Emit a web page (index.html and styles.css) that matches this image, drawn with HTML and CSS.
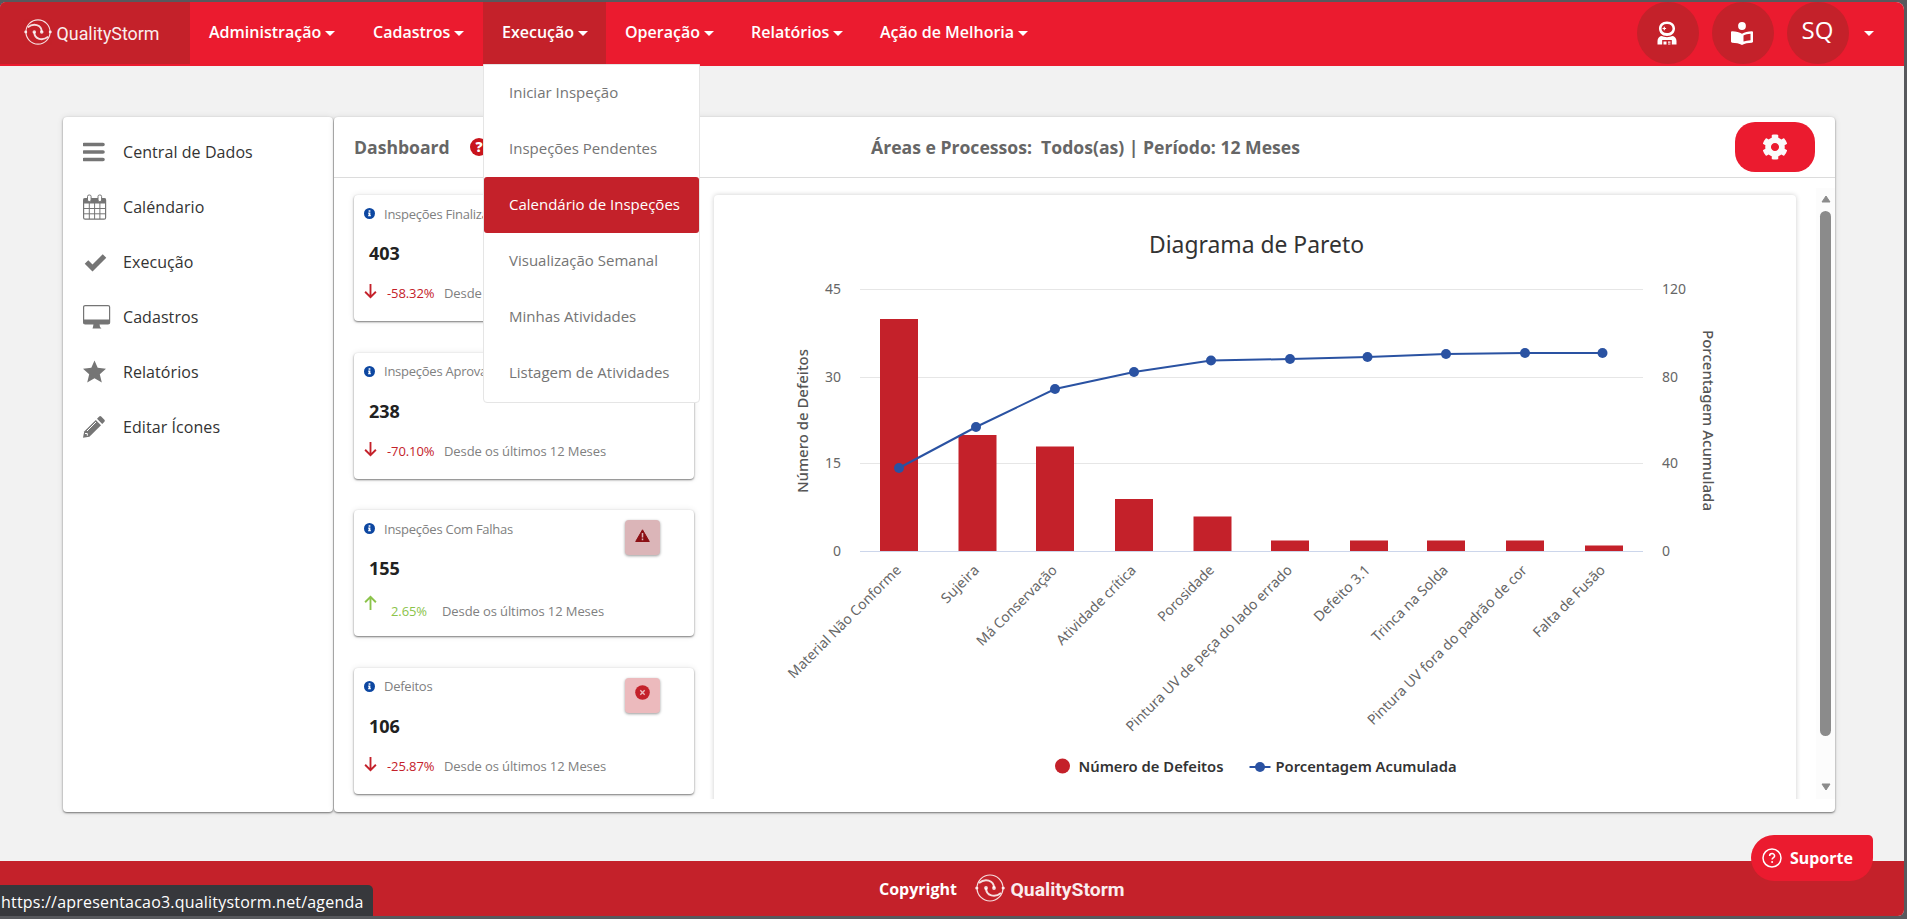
FILE: index.html
```
<!DOCTYPE html>
<html lang="pt-BR">
<head>
    <meta charset="UTF-8">
    <meta name="viewport" content="width=device-width, initial-scale=1.0">
    <title>QualityStorm</title>
    <link rel="stylesheet" href="styles.css">
</head>
<body>
    <svg width="0" height="0" class="defs">
        <symbol id="storm" viewBox="0 0 30 28">
            <g fill="none" stroke="#fff" stroke-width="1.2" opacity="0.85">
                <circle cx="15" cy="14" r="13"/>
                <path d="M4 9c6-5 15-3 15 5" stroke-width="2"/>
                <path d="M26 19c-6 5-15 3-15-5" stroke-width="2"/>
            </g>
            <g fill="#fff" opacity="0.85">
                <circle cx="11" cy="14" r="1.9"/>
                <circle cx="19" cy="14" r="1.9"/>
                <circle cx="1.8" cy="14" r="1.6"/>
                <circle cx="28.2" cy="14" r="1.6"/>
            </g>
        </symbol>
        <symbol id="info" viewBox="0 0 10 10">
            <circle cx="5" cy="5" r="5" fill="#0d47a1"/>
            <path d="M4.2 2h1.6v1.4H4.2zM3.8 4.2h2v2.4h.5v1H3.7v-1h.5V5.2h-.4z" fill="#fff"/>
        </symbol>
        <symbol id="down" viewBox="0 0 14 16">
            <path d="M7 .5v14M1.2 8.8L7 14.6l5.8-5.8" fill="none" stroke="#c4212a" stroke-width="2"/>
        </symbol>
        <symbol id="up" viewBox="0 0 14 16">
            <path d="M7 15.5v-14M1.2 7.2L7 1.4l5.8 5.8" fill="none" stroke="#8bc34a" stroke-width="2"/>
        </symbol>
    </svg>
    <div class="window">
        <div class="page">
            <header class="header">
                <a class="brand" href="#">
                    <svg width="160" height="34" viewBox="0 0 160 34">
                        <use href="#storm" x="0" y="3" width="28" height="26"/>
                        <text class="logo-text" x="32.500" y="24" textLength="103" lengthAdjust="spacingAndGlyphs">QualityStorm</text>
                    </svg>
                </a>
                <nav class="nav">
                    <a class="nav-item adm" href="#">Administração<i class="caret"></i></a>
                    <a class="nav-item cad" href="#">Cadastros<i class="caret"></i></a>
                    <div class="nav-item exe active">Execução<i class="caret"></i>
                        <div class="dropdown">
                            <a href="#">Iniciar Inspeção</a>
                            <a href="#">Inspeções Pendentes</a>
                            <a href="#" class="selected">Calendário de Inspeções</a>
                            <a href="#">Visualização Semanal</a>
                            <a href="#">Minhas Atividades</a>
                            <a href="#">Listagem de Atividades</a>
                        </div>
                    </div>
                    <a class="nav-item ope" href="#">Operação<i class="caret"></i></a>
                    <a class="nav-item rel" href="#">Relatórios<i class="caret"></i></a>
                    <a class="nav-item aca" href="#">Ação de Melhoria<i class="caret"></i></a>
                </nav>
                <div class="user">
                    <div class="round">
                        <svg width="20" height="24" viewBox="0 0 20 24">
                            <path fill="#fff" fill-rule="evenodd" d="M10 .5c5 0 8 3 8 7s-3 7.500-8 7.500-8-3.500-8-7.500 3-7 8-7zM10 3C6.500 3 4.500 4.800 4.500 7.500S6.500 12 10 12s5.500-1.800 5.500-4.500S13.500 3 10 3z"/>
                            <path d="M5.500 7.500h3.600M7.300 5.700v3.600" stroke="#fff" stroke-width="1.200"/>
                            <path fill="#fff" d="M.5 23.500V20c0-3 2-5 4.500-5 2 1.500 8 1.500 10 0 2.500 0 4.500 2 4.500 5v3.500h-4.700V19H5.200v4.500z"/>
                            <path fill="#fff" d="M6.500 20.500h3v3h-3zM11 20.500h2.500v1.200H11zM11 22.500h2.500v1H11z"/>
                        </svg>
                    </div>
                    <div class="round">
                        <svg width="22" height="23" viewBox="0 0 22 23">
                            <circle cx="11" cy="4" r="3.900" fill="#fff"/>
                            <path fill="#fff" fill-rule="evenodd" d="M1.200 9.200C5 9.200 8.500 10 11 11.800 13.500 10 17 9.200 20.800 9.200c.7 0 1.200.4 1.200 1.200v9.200c0 .7-.4 1.100-1.200 1.200-3.500.2-7 .6-9.800 2.200-2.800-1.600-6.300-2-9.800-2.200-.8-.1-1.200-.5-1.200-1.200v-9.200c0-.8.500-1.200 1.200-1.200zM12.500 13.400v6.200c2.100-.8 4.500-1.200 7-1.400v-6.400c-2.700.2-5.100.7-7 1.600z"/>
                        </svg>
                    </div>
                    <div class="round initials">SQ</div>
                    <i class="caret"></i>
                </div>
            </header>

            <main class="main">
                <aside class="sidebar">
                    <a href="#"><svg width="28" height="26" viewBox="0 0 28 26"><path d="M1 5.500h19M1 13h19M1 20.500h19" stroke="#757575" stroke-width="3.600" stroke-linecap="round"/></svg>Central de Dados</a>
                    <a href="#"><svg width="28" height="26" viewBox="0 0 28 26"><rect x=".6" y="4.600" width="22" height="20.600" rx="1.500" fill="#fff" stroke="#757575" stroke-width="1.200"/><path d="M.6 4.500h22v5H.6z" fill="#757575"/><path d="M6.300 9v16M11.600 9v16M16.900 9v16M1 14.500h21M1 19.800h21" stroke="#757575"/><rect x="4.500" y="1" width="3.600" height="6.500" rx="1.500" fill="#fff" stroke="#757575"/><rect x="15" y="1" width="3.600" height="6.500" rx="1.500" fill="#fff" stroke="#757575"/></svg>Caléndario</a>
                    <a href="#"><svg width="28" height="26" viewBox="0 0 28 26"><path d="M3.500 13l6 6L21.500 7" fill="none" stroke="#757575" stroke-width="5"/></svg>Execução</a>
                    <a href="#"><svg width="28" height="26" viewBox="0 0 28 26"><rect x=".6" y="1.600" width="26" height="18.400" rx="1.500" fill="#fff" stroke="#757575" stroke-width="1.200"/><path d="M.6 15.500h26v3.500q0 1-1 1h-24q-1 0-1-1zM10.500 20h6l.5 3 1.500 1.500h-9L10 23z" fill="#757575"/></svg>Cadastros</a>
                    <a href="#"><svg width="28" height="26" viewBox="0 0 28 26"><path d="M11.500 1.500l3.200 7.300 8.300.9-6.200 5.500 2 8.300-7.300-4.200-7.300 4.200 2-8.300L0 9.700l8.300-.9z" fill="#757575"/></svg>Relatórios</a>
                    <a href="#"><svg width="28" height="26" viewBox="0 0 28 26"><path d="M0 23.800l1.200-6.300L12.800 6l5.200 5.200L6.400 22.700z" fill="#757575"/><path d="M14 4.800l2.200-2.200q1-1 2 0l3.200 3.200q1 1 0 2L19.200 10z" fill="#757575"/><path d="M4 17L13 8M2 19.500h2.300v2.200" stroke="#fff" stroke-width="1" fill="none"/></svg>Editar Ícones</a>
                </aside>

                <section class="content">
                    <div class="content-header">
                        <h1>Dashboard</h1>
                        <span class="help">?</span>
                        <h2>Áreas e Processos:&nbsp; Todos(as) | Período: 12 Meses</h2>
                        <button class="gear">
                            <svg width="26" height="26" viewBox="0 0 512 512"><path fill="#fafafa" d="M487.400 315.700l-42.600-24.600c4.300-23.200 4.300-47 0-70.200l42.600-24.600c4.900-2.800 7.100-8.600 5.500-14-11.100-35.600-30-67.800-54.700-94.600-3.800-4.100-10-5.100-14.800-2.300L380.800 110c-17.900-15.400-38.500-27.300-60.800-35.100V25.800c0-5.600-3.900-10.500-9.400-11.700-36.700-8.200-74.300-7.800-109.200 0-5.500 1.200-9.400 6.100-9.400 11.700V75c-22.200 7.900-42.800 19.800-60.800 35.100L88.700 85.500c-4.900-2.800-11-1.900-14.800 2.300-24.700 26.700-43.600 58.900-54.700 94.600-1.700 5.400.6 11.200 5.500 14L67.300 221c-4.300 23.200-4.300 47 0 70.200l-42.600 24.600c-4.900 2.800-7.100 8.600-5.500 14 11.100 35.600 30 67.800 54.700 94.600 3.800 4.100 10 5.100 14.800 2.300l42.600-24.600c17.900 15.400 38.500 27.300 60.800 35.100v49.200c0 5.600 3.900 10.500 9.400 11.700 36.700 8.200 74.300 7.800 109.200 0 5.500-1.200 9.400-6.100 9.400-11.700v-49.200c22.200-7.900 42.800-19.800 60.800-35.100l42.600 24.600c4.900 2.800 11 1.900 14.800-2.300 24.700-26.700 43.600-58.900 54.700-94.600 1.500-5.500-.7-11.300-5.600-14.100zM256 336c-44.100 0-80-35.900-80-80s35.900-80 80-80 80 35.900 80 80-35.900 80-80 80z"/></svg>
                        </button>
                    </div>
                    <div class="scroller">
                        <div class="cards">
                            <div class="card">
                                <div class="card-title"><svg class="info"><use href="#info"/></svg>Inspeções Finalizadas</div>
                                <div class="card-value">403</div>
                                <div class="card-trend"><svg class="arrow"><use href="#down"/></svg><span class="percent">-58.32%</span><span>Desde os últimos 12 Meses</span></div>
                            </div>
                            <div class="card">
                                <div class="card-title"><svg class="info"><use href="#info"/></svg>Inspeções Aprovadas</div>
                                <div class="card-value">238</div>
                                <div class="card-trend"><svg class="arrow"><use href="#down"/></svg><span class="percent">-70.10%</span><span>Desde os últimos 12 Meses</span></div>
                            </div>
                            <div class="card">
                                <div class="card-title"><svg class="info"><use href="#info"/></svg>Inspeções Com Falhas</div>
                                <div class="card-value">155</div>
                                <div class="card-trend rise"><svg class="arrow"><use href="#up"/></svg><span class="percent">2.65%</span><span>Desde os últimos 12 Meses</span></div>
                                <div class="badge warning"><svg width="15" height="13" viewBox="0 0 15 13"><path d="M7.500.8L14.300 12.500H.7z" fill="#8b0f14" stroke="#8b0f14" stroke-linejoin="round"/><path d="M7.500 4v4.500M7.500 9.600v1.600" stroke="#dbb5b8" stroke-width="1.500"/></svg></div>
                            </div>
                            <div class="card">
                                <div class="card-title"><svg class="info"><use href="#info"/></svg>Defeitos</div>
                                <div class="card-value">106</div>
                                <div class="card-trend"><svg class="arrow"><use href="#down"/></svg><span class="percent">-25.87%</span><span>Desde os últimos 12 Meses</span></div>
                                <div class="badge error"><svg width="15" height="15" viewBox="0 0 15 15"><circle cx="7.500" cy="7.500" r="7.300" fill="#c4212a"/><path d="M5.300 5.300l4.400 4.400M9.700 5.300L5.300 9.700" stroke="#ecbabd" stroke-width="1.400"/></svg></div>
                            </div>
                        </div>
                        <div class="chart">
                            <svg width="1082" height="620" viewBox="714 195 1082 620">
                                <text class="chart-title" x="1149" y="253" textLength="215" lengthAdjust="spacingAndGlyphs">Diagrama de Pareto</text>
                                <g class="grid">
                                    <path d="M860 289.500H1643M860 377.500H1643M860 463.500H1643"/>
                                    <path class="base" d="M860 551.500H1643"/>
                                </g>
                                <g class="ticks end">
                                    <text x="841" y="294">45</text>
                                    <text x="841" y="382">30</text>
                                    <text x="841" y="468">15</text>
                                    <text x="841" y="556">0</text>
                                </g>
                                <g class="ticks">
                                    <text x="1662" y="294">120</text>
                                    <text x="1662" y="382">80</text>
                                    <text x="1662" y="468">40</text>
                                    <text x="1662" y="556">0</text>
                                </g>
                                <text class="axis-title" transform="translate(808 493) rotate(-90)" textLength="144" lengthAdjust="spacingAndGlyphs">Número de Defeitos</text>
                                <text class="axis-title" transform="translate(1703 330) rotate(90)" textLength="181" lengthAdjust="spacingAndGlyphs">Porcentagem Acumulada</text>
                                <g class="bars">
                                    <rect x="880" y="319" width="38" height="232"/>
                                    <rect x="958.500" y="435" width="38" height="116"/>
                                    <rect x="1036" y="446.500" width="38" height="104.500"/>
                                    <rect x="1115" y="499" width="38" height="52"/>
                                    <rect x="1193.500" y="516.500" width="38" height="34.500"/>
                                    <rect x="1271" y="540.500" width="38" height="10.500"/>
                                    <rect x="1350" y="540.500" width="38" height="10.500"/>
                                    <rect x="1427" y="540.500" width="38" height="10.500"/>
                                    <rect x="1506" y="540.500" width="38" height="10.500"/>
                                    <rect x="1585" y="545.500" width="38" height="5.500"/>
                                </g>
                                <polyline class="line" points="899,468 976,427 1055,389 1134,372 1211,360.500 1290,359 1367.500,357 1446,354 1525,353 1602.500,353"/>
                                <g class="dots">
                                    <circle cx="899" cy="468" r="5"/>
                                    <circle cx="976" cy="427" r="5"/>
                                    <circle cx="1055" cy="389" r="5"/>
                                    <circle cx="1134" cy="372" r="5"/>
                                    <circle cx="1211" cy="360.500" r="5"/>
                                    <circle cx="1290" cy="359" r="5"/>
                                    <circle cx="1367.500" cy="357" r="5"/>
                                    <circle cx="1446" cy="354" r="5"/>
                                    <circle cx="1525" cy="353" r="5"/>
                                    <circle cx="1602.500" cy="353" r="5"/>
                                </g>
                                <g class="labels">
                                    <text transform="translate(902 571) rotate(-45)" textLength="153" lengthAdjust="spacingAndGlyphs">Material Não Conforme</text>
                                    <text transform="translate(980 571) rotate(-45)" textLength="47" lengthAdjust="spacingAndGlyphs">Sujeira</text>
                                    <text transform="translate(1058 571) rotate(-45)" textLength="107" lengthAdjust="spacingAndGlyphs">Má Conservação</text>
                                    <text transform="translate(1137 571) rotate(-45)" textLength="106" lengthAdjust="spacingAndGlyphs">Atividade crítica</text>
                                    <text transform="translate(1215 571) rotate(-45)" textLength="73" lengthAdjust="spacingAndGlyphs">Porosidade</text>
                                    <text transform="translate(1293 571) rotate(-45)" textLength="228" lengthAdjust="spacingAndGlyphs">Pintura UV de peça do lado errado</text>
                                    <text transform="translate(1371 571) rotate(-45)" textLength="73" lengthAdjust="spacingAndGlyphs">Defeito 3.1</text>
                                    <text transform="translate(1449 571) rotate(-45)" textLength="101" lengthAdjust="spacingAndGlyphs">Trinca na Solda</text>
                                    <text transform="translate(1528 571) rotate(-45)" textLength="219" lengthAdjust="spacingAndGlyphs">Pintura UV fora do padrão de cor</text>
                                    <text transform="translate(1606 571) rotate(-45)" textLength="95" lengthAdjust="spacingAndGlyphs">Falta de Fusão</text>
                                </g>
                                <circle cx="1062.500" cy="766" r="7.500" fill="#c4212a"/>
                                <text class="legend" x="1078.500" y="772" textLength="145" lengthAdjust="spacingAndGlyphs">Número de Defeitos</text>
                                <path class="line" d="M1249.500 767h21"/>
                                <circle cx="1260" cy="767" r="5" fill="#2a52a2"/>
                                <text class="legend" x="1275.500" y="772" textLength="181" lengthAdjust="spacingAndGlyphs">Porcentagem Acumulada</text>
                            </svg>
                        </div>
                        <div class="scrollbar">
                            <svg width="10" height="8" viewBox="0 0 10 8"><path d="M5 1l4 6H1z" fill="#8b8b8b" stroke="#8b8b8b" stroke-linejoin="round"/></svg>
                            <div class="thumb"></div>
                            <svg width="10" height="8" viewBox="0 0 10 8"><path d="M5 7l4-6H1z" fill="#8b8b8b" stroke="#8b8b8b" stroke-linejoin="round"/></svg>
                        </div>
                    </div>
                </section>
            </main>

            <footer class="footer">
                <span>Copyright</span>
                <svg width="170" height="34" viewBox="0 0 170 34">
                    <use href="#storm" x="0" y="2" width="30" height="28"/>
                    <text class="logo-text" x="35.500" y="24" textLength="114" lengthAdjust="spacingAndGlyphs">QualityStorm</text>
                </svg>
            </footer>

            <div class="support">
                <svg width="20" height="20" viewBox="0 0 20 20"><circle cx="10" cy="10" r="9" fill="none" stroke="#fff" stroke-width="1.500"/><path d="M7.600 8c0-3.200 5-3.200 5 0 0 1.700-2.500 1.700-2.500 3.600" fill="none" stroke="#fff" stroke-width="1.500"/><circle cx="10.100" cy="14" r="1" fill="#fff"/></svg>
                <span>Suporte</span>
            </div>
            <div class="status">https://apresentacao3.qualitystorm.net/agenda</div>
        </div>
    </div>
</body>
</html>
```
FILE: styles.css
```
* {
    box-sizing: border-box;
}

body {
    margin: 0;
    font-family: "Open Sans", "Noto Sans", sans-serif;
    overflow: hidden;
}

a {
    text-decoration: none;
    color: inherit;
}

.defs {
    position: absolute;
}

.window {
    height: 919px;
    padding: 2px 3px 3px 0;
    background: #58595d;
}

.page {
    position: relative;
    height: 914px;
    display: flex;
    flex-direction: column;
    background: #f2f2f2;
    border-radius: 6px 8px 6px 0;
    overflow: hidden;
}

/* header */
.header {
    height: 64px;
    flex: none;
    display: flex;
    align-items: flex-start;
    background: #eb1b2f;
}

.brand {
    width: 190px;
    height: 62px;
    padding: 14px 0 0 24px;
    background: #c4212a;
}

.logo-text {
    font-family: Roboto, sans-serif;
    font-size: 19px;
    fill: #fff;
    opacity: 0.92;
}

.nav {
    display: flex;
    height: 62px;
}

.nav-item {
    position: relative;
    display: flex;
    align-items: center;
    padding-left: 19px;
    padding-bottom: 3px;
    color: #fff;
    font-size: 16px;
    font-weight: 600;
    white-space: nowrap;
}

.adm { width: 164px; }
.cad { width: 129px; }
.exe { width: 123px; }
.ope { width: 126px; }
.rel { width: 129px; }

.active {
    background: #c4212a;
}

.caret {
    margin: 4px 0 0 4px;
    border: 5px solid transparent;
    border-top-color: #fff;
    border-bottom: 0;
}

.dropdown {
    position: absolute;
    z-index: 5;
    top: 62px;
    left: 0;
    width: 217px;
    height: 339px;
    background: #fff;
    border: 1px solid #e5e5e5;
    border-radius: 0 0 4px 4px;
}

.dropdown a {
    display: flex;
    align-items: center;
    height: 56px;
    padding-left: 25px;
    padding-bottom: 2px;
    border-radius: 3px;
    color: #757575;
    font-size: 15px;
    font-weight: 400;
}

.dropdown .selected {
    background: #c4212a;
    color: #fff;
}

.user {
    margin-left: auto;
    padding-right: 30px;
    display: flex;
    align-items: center;
    gap: 13px;
}

.round {
    width: 62px;
    height: 62px;
    border-radius: 50%;
    background: #c4212a;
    display: flex;
    align-items: center;
    justify-content: center;
    padding-right: 3px;
}

.initials {
    padding: 0 1px 8px 0;
    color: #fff;
    font-size: 24px;
    font-weight: 500;
}

.user .caret {
    margin: 0 0 0 2px;
}

/* main area */
.main {
    flex: 1;
    display: flex;
    align-items: flex-start;
    gap: 1px;
    padding: 51px 69px 0 63px;
}

.sidebar, .content {
    height: 695px;
    background: #fff;
    border-radius: 4px;
    box-shadow: 0 1px 2px rgba(0, 0, 0, 0.5), 0 0 6px rgba(0, 0, 0, 0.1);
}

.sidebar {
    width: 270px;
    padding: 7px 0 0 20px;
}

.sidebar a {
    display: flex;
    align-items: center;
    gap: 12px;
    height: 55px;
    color: #333;
    font-size: 16px;
    letter-spacing: 0.07px;
}

.content {
    flex: 1;
    min-width: 0;
}

.content-header {
    position: relative;
    height: 61px;
    display: flex;
    align-items: center;
    padding: 0 20px;
    border-bottom: 1px solid #dcdcdc;
    color: #666;
}

.content-header h1, .content-header h2 {
    margin: 0;
    font-size: 17.6px;
    font-weight: 700;
}

.content-header h1 {
    width: 116px;
}

.help {
    width: 18px;
    height: 18px;
    border-radius: 50%;
    background: #c9141c;
    color: #fff;
    font-size: 14px;
    font-weight: 800;
    line-height: 18px;
    text-align: center;
}

.content-header h2 {
    margin-left: 383px;
    white-space: nowrap;
}

.gear {
    margin-left: auto;
    width: 80px;
    height: 50px;
    padding: 0;
    border: 0;
    border-radius: 20px;
    background: #eb1b2f;
    display: flex;
    align-items: center;
    justify-content: center;
}

.scroller {
    height: 611px;
    margin-top: 10px;
    padding: 7px 0 0 20px;
    display: flex;
    overflow: hidden;
}

.cards {
    display: flex;
    flex-direction: column;
    gap: 31.6px;
    width: 340px;
    margin-right: 20px;
}

.card {
    position: relative;
    flex: none;
    height: 126px;
    padding: 6px 10px;
    border-radius: 4px;
    box-shadow: 0 1px 2px rgba(0, 0, 0, 0.5), 0 0 6px rgba(0, 0, 0, 0.1);
    font-size: 13px;
    color: #808080;
}

.card-title {
    height: 25px;
    display: flex;
    align-items: center;
    gap: 9px;
    letter-spacing: -0.25px;
}

.info {
    width: 11px;
    height: 11px;
}

.card-value {
    height: 54px;
    line-height: 54px;
    padding-left: 5px;
    color: #212121;
    font-size: 18px;
    font-weight: 700;
}

.card-trend {
    height: 26px;
    display: flex;
    align-items: center;
    letter-spacing: -0.1px;
}

.arrow {
    width: 13px;
    height: 16px;
    margin: 0 10px 4px 0;
}

.percent {
    width: 57px;
    color: #c4212a;
}

.rise {
    padding-top: 5px;
}

.rise .arrow {
    margin: 0 14px 15px 0;
}

.rise .percent {
    width: 51px;
    color: #8bc34a;
}

.badge {
    position: absolute;
    top: 10px;
    right: 34px;
    width: 35px;
    height: 35px;
    display: flex;
    justify-content: center;
    border-radius: 4px;
    box-shadow: 0 1px 3px rgba(0, 0, 0, 0.4);
}

.warning {
    padding-top: 9px;
    background: #dbb5b8;
}

.error {
    padding-top: 7px;
    background: #ecbabd;
}

.chart {
    flex: none;
    width: 1082px;
    height: 640px;
    border-radius: 4px;
    box-shadow: 0 0 5px rgba(0, 0, 0, 0.2);
}

.chart text {
    font-family: "Noto Sans", "Open Sans", sans-serif;
}

.chart .chart-title {
    font-size: 23px;
    fill: #333;
}

.grid path {
    stroke: #e6e6e6;
}

.grid .base {
    stroke: #ccd6eb;
}

.ticks text {
    font-size: 14px;
    fill: #666;
}

.end text {
    text-anchor: end;
}

.axis-title {
    font-size: 15px;
    font-weight: 500;
    fill: #555;
}

.bars rect {
    fill: #c4212a;
}

.line {
    fill: none;
    stroke: #2a52a2;
    stroke-width: 2;
}

.dots circle {
    fill: #2a52a2;
}

.labels text {
    font-size: 14px;
    fill: #666;
    text-anchor: end;
}

.legend {
    font-size: 15px;
    font-weight: 600;
    fill: #333;
}

.scrollbar {
    width: 19px;
    height: 611px;
    margin: -7px 0 0 auto;
    padding: 7px 0 8px;
    display: flex;
    flex-direction: column;
    align-items: center;
    background: #fcfcfc;
}

.scrollbar svg:last-child {
    margin-top: auto;
}

.thumb {
    width: 11px;
    height: 525px;
    margin-top: 8px;
    border-radius: 6px;
    background: #8b8b8b;
}

/* footer */
.footer {
    height: 55px;
    flex: none;
    display: flex;
    align-items: center;
    padding-left: 879px;
    background: #c4212a;
    color: #fff;
    font-size: 16px;
    font-weight: 700;
}

.footer span {
    width: 96px;
}

.support {
    position: absolute;
    right: 31px;
    bottom: 35px;
    width: 122px;
    height: 46px;
    padding-left: 11px;
    display: flex;
    align-items: center;
    gap: 8px;
    border-radius: 24px 5px 24px 24px;
    background: #eb1b2f;
    color: #fff;
    font-family: "Noto Sans", sans-serif;
    font-size: 16px;
    font-weight: 700;
}

.status {
    position: absolute;
    left: 0;
    bottom: 0;
    width: 373px;
    height: 31px;
    padding-left: 1px;
    line-height: 34px;
    background: #37383c;
    border-radius: 0 5px 0 0;
    color: #fff;
    font-size: 16px;
    letter-spacing: 0.2px;
    white-space: nowrap;
}
```
